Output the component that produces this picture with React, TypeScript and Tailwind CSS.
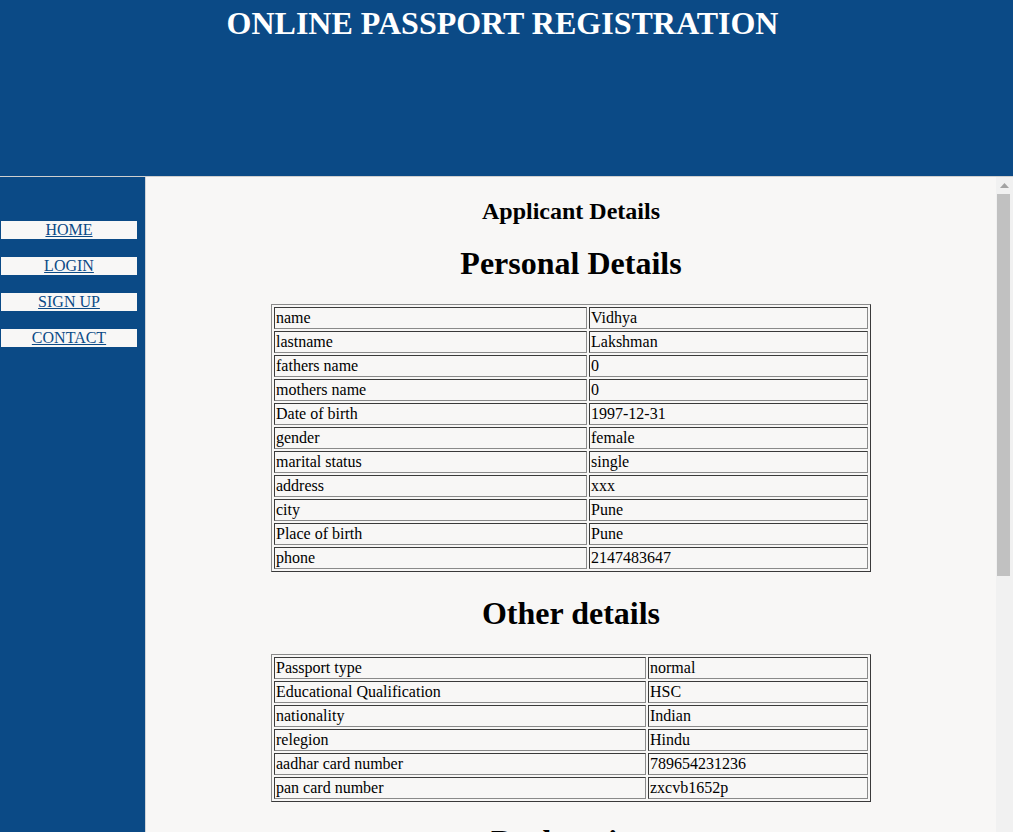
import React from 'react';

const personal: [string, string][] = [
  ['name', 'Vidhya'],
  ['lastname', 'Lakshman'],
  ['fathers name', '0'],
  ['mothers name', '0'],
  ['Date of birth', '1997-12-31'],
  ['gender', 'female'],
  ['marital status', 'single'],
  ['address', 'xxx'],
  ['city', 'Pune'],
  ['Place of birth', 'Pune'],
  ['phone', '2147483647'],
];

const other: [string, string][] = [
  ['Passport type', 'normal'],
  ['Educational Qualification', 'HSC'],
  ['nationality', 'Indian'],
  ['relegion', 'Hindu'],
  ['aadhar card number', '789654231236'],
  ['pan card number', 'zxcvb1652p'],
];

const navItems = ['HOME', 'LOGIN', 'SIGN UP', 'CONTACT'];

function DetailTable({ rows, firstCol }: { rows: [string, string][]; firstCol: 'narrow' | 'wide' }) {
  return (
    <table className="mx-auto w-[600px] table-fixed border-separate border-spacing-[2px] border border-[#8a8a8a] border-r-[#3a3a3a] border-b-[#3a3a3a]">
      <tbody>
        {rows.map(([label, value]) => (
          <tr key={label}>
            <td
              className={
                (firstCol === 'narrow' ? 'w-[313px] ' : 'w-[372px] ') +
                'border border-[#3a3a3a] border-r-[#8a8a8a] border-b-[#8a8a8a] p-[1px] text-[16px] leading-[18px] whitespace-nowrap'
              }
            >
              {label}
            </td>
            <td className="border border-[#3a3a3a] border-r-[#8a8a8a] border-b-[#8a8a8a] p-[1px] text-[16px] leading-[18px] whitespace-nowrap">
              {value}
            </td>
          </tr>
        ))}
      </tbody>
    </table>
  );
}

export default function App() {
  return (
    <div className="w-[1013px] h-[832px] overflow-hidden flex flex-col font-['Liberation_Serif','Times_New_Roman',serif] text-black">
      <header className="h-[176px] shrink-0 bg-[#0b4a86] pr-[8px]">
        <h1 className="pt-[5px] text-center text-[32px] leading-[36px] font-bold text-white">
          ONLINE PASSPORT REGISTRATION
        </h1>
      </header>

      <div className="flex flex-1 min-h-0 border-t border-[#cfcfcf]">
        <nav className="w-[146px] shrink-0 bg-[#0b4a86] border-r border-[#cfd3d8] pt-[44px] flex flex-col gap-[18px]">
          {navItems.map((item) => (
            <div key={item} className="ml-[1px] w-[136px] h-[18px] bg-[#f8f7f6] text-center text-[16px] leading-[18px]">
              <a href="#" className="text-[#0b4a86] underline">
                {item}
              </a>
            </div>
          ))}
        </nav>

        <main className="flex flex-1 min-w-0 bg-[#f8f7f6]">
          <div className="flex-1 min-w-0 overflow-hidden pt-[21px]">
            <h2 className="text-center text-[24px] leading-[27px] font-bold">Applicant Details</h2>
            <h1 className="mt-[20px] text-center text-[32px] leading-[36px] font-bold">Personal Details</h1>
            <div className="mt-[23px]">
              <DetailTable rows={personal} firstCol="narrow" />
            </div>
            <h1 className="mt-[23px] text-center text-[32px] leading-[36px] font-bold">Other details</h1>
            <div className="mt-[23px]">
              <DetailTable rows={other} firstCol="wide" />
            </div>
            <h1 className="mt-[21px] text-center text-[32px] leading-[36px] font-bold">Declaration</h1>
          </div>

          <div className="w-[17px] shrink-0 bg-[#f1f1f1] flex flex-col">
            <div className="h-[17px] flex items-center justify-center">
              <svg width="9" height="5" viewBox="0 0 9 5">
                <path d="M0 5 L4.5 0 L9 5 Z" fill="#a3a3a3" />
              </svg>
            </div>
            <div className="ml-[1px] w-[13px] h-[382px] bg-[#c1c1c1]" />
          </div>
        </main>
      </div>
    </div>
  );
}
